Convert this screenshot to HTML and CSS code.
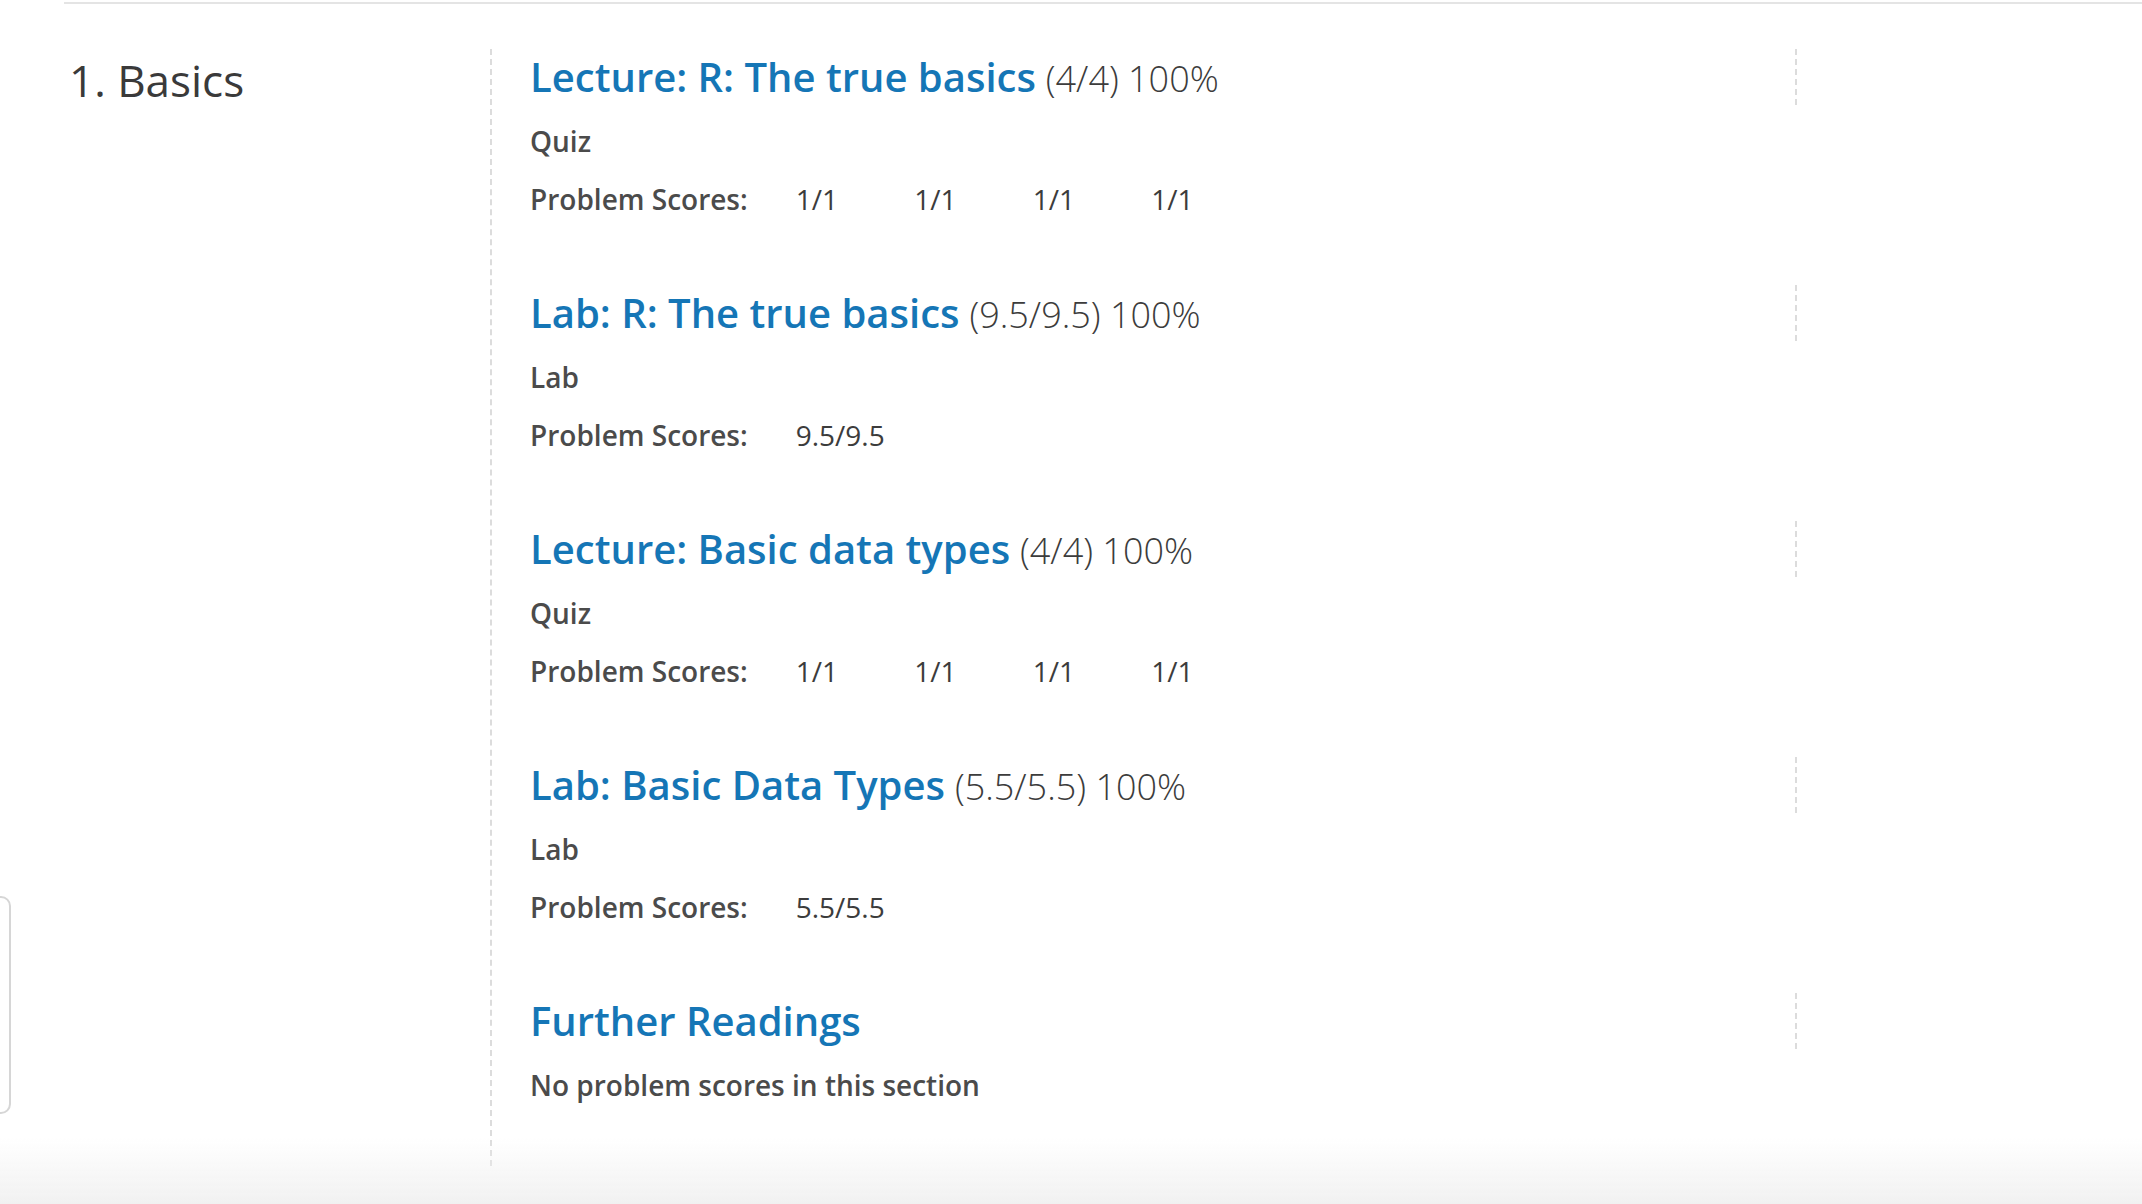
FILE: index.html
```html
<!DOCTYPE html>
<html lang="en">
<head>
<meta charset="utf-8">
<title>Progress</title>
<link rel="stylesheet" href="styles.css">
</head>
<body>
<div class="page">
  <div class="top-rule"></div>
  <div class="chapter">
    <h2 class="chapter-title">1. Basics</h2>
    <div class="sections">
      <div class="section">
        <div class="section-head"><a class="section-link" href="#">Lecture: R: The true basics</a> <span class="section-score">(4/4) 100%</span></div>
        <div class="section-type">Quiz</div>
        <div class="scores"><span class="scores-label">Problem Scores:</span><span class="score">1/1</span><span class="score">1/1</span><span class="score">1/1</span><span class="score">1/1</span></div>
      </div>
      <div class="section">
        <div class="section-head"><a class="section-link" href="#">Lab: R: The true basics</a> <span class="section-score">(9.5/9.5) 100%</span></div>
        <div class="section-type">Lab</div>
        <div class="scores"><span class="scores-label">Problem Scores:</span><span class="score">9.5/9.5</span></div>
      </div>
      <div class="section">
        <div class="section-head"><a class="section-link" href="#">Lecture: Basic data types</a> <span class="section-score">(4/4) 100%</span></div>
        <div class="section-type">Quiz</div>
        <div class="scores"><span class="scores-label">Problem Scores:</span><span class="score">1/1</span><span class="score">1/1</span><span class="score">1/1</span><span class="score">1/1</span></div>
      </div>
      <div class="section">
        <div class="section-head"><a class="section-link" href="#">Lab: Basic Data Types</a> <span class="section-score">(5.5/5.5) 100%</span></div>
        <div class="section-type">Lab</div>
        <div class="scores"><span class="scores-label">Problem Scores:</span><span class="score">5.5/5.5</span></div>
      </div>
      <div class="section section-last">
        <div class="section-head"><a class="section-link" href="#">Further Readings</a></div>
        <div class="section-type">No problem scores in this section</div>
      </div>
    </div>
  </div>
</div>
<div class="side-tab"></div>
<div class="bottom-fade"></div>
</body>
</html>
```
FILE: styles.css
```css
html, body {
  margin: 0;
  padding: 0;
  background: #ffffff;
}
body {
  font-family: "Open Sans", "Liberation Sans", sans-serif;
  color: #4b4b4b;
  min-height: 1204px;
  overflow: hidden;
}
.page {
  padding-left: 64px;
}
.top-rule {
  height: 0;
  border-top: 2px solid #e4e4e4;
  margin-top: 2px;
}
.chapter {
  display: flex;
  margin-top: 45px;
}
.chapter-title {
  width: 426px;
  flex: none;
  margin: 0;
  padding: 1px 0 0 5px;
  box-sizing: border-box;
  font-size: 44px;
  font-weight: 400;
  line-height: 60px;
  color: #3a3a3a;
}
.sections {
  border-left: 2px dashed #dcdcdc;
  padding-left: 38px;
  padding-bottom: 61px;
  width: 1267px;
}
.section {
  margin-bottom: 66px;
}
.section-last {
  margin-bottom: 0;
}
.section-head {
  height: 56px;
  line-height: 56px;
  font-size: 38px;
  border-right: 2px dashed #dcdcdc;
  white-space: nowrap;
}
.section-link {
  font-size: 40px;
  font-weight: 600;
  color: #1576b6;
  text-decoration: none;
}
.section-score {
  font-size: 36px;
  font-weight: 300;
  color: #3c3c3c;
}
.section-type {
  margin-top: 16px;
  line-height: 40px;
  font-size: 28px;
  font-weight: 600;
  color: #4b4b4b;
}
.scores {
  display: flex;
  margin-top: 18px;
  line-height: 40px;
  font-size: 28px;
}
.scores-label {
  font-weight: 600;
  color: #4b4b4b;
  margin-right: 48px;
}
.score {
  font-weight: 400;
  color: #3c3c3c;
  width: 118.5px;
}
.side-tab {
  position: fixed;
  left: -20px;
  top: 896px;
  width: 27px;
  height: 214px;
  border: 2px solid #d6d6d6;
  border-radius: 10px;
  background: #ffffff;
}
.bottom-fade {
  position: fixed;
  left: 0;
  right: 0;
  bottom: 0;
  height: 66px;
  background: linear-gradient(to bottom, rgba(242,242,242,0), rgba(241,241,241,1));
  pointer-events: none;
}
```
